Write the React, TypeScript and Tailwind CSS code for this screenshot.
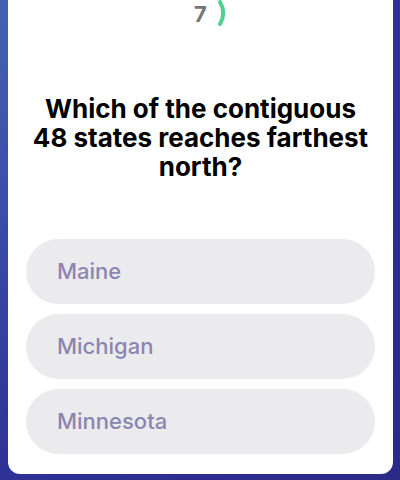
const options = ["Maine", "Michigan", "Minnesota"];

const App = () => {
  return (
    <div className="w-[400px] h-[480px] overflow-hidden bg-gradient-to-br from-[#4462b4] via-[#2f3196] to-[#2b2a86] pl-[8px] pr-[7px]">
      <div className="h-[474px] bg-white rounded-b-[12px] flex flex-col items-center" style={{ fontFamily: "Inter, 'Noto Sans', sans-serif" }}>
        {/* timer */}
        <div className="relative w-[50px] h-[30px] flex justify-center">
          <span className="text-[22px] font-bold text-[#767676] leading-none mt-[3px]">7</span>
          <svg className="absolute left-[-22px] top-[-20px]" width="94" height="66" viewBox="-47 -33 94 66">
            <path d="M 19.05 -11 A 22 22 0 0 1 19.05 11" fill="none" stroke="#4fd08f" strokeWidth="4" strokeLinecap="round" />
          </svg>
        </div>

        <h1 className="mt-[64px] px-2 text-center text-[26px] leading-[29px] font-bold text-black whitespace-nowrap">
          Which of the contiguous
          <br />
          48 states reaches farthest
          <br />
          north?
        </h1>

        <div className="mt-[58px] w-full px-[18px] flex flex-col gap-[10px]">
          {options.map((o) => (
            <div key={o} className="h-[65px] rounded-full bg-[#ebebee] flex items-center pl-[31px]">
              <span className="text-[22px] font-medium text-[#8a86b0]">{o}</span>
            </div>
          ))}
        </div>
      </div>
    </div>
  );
};

export default App;
